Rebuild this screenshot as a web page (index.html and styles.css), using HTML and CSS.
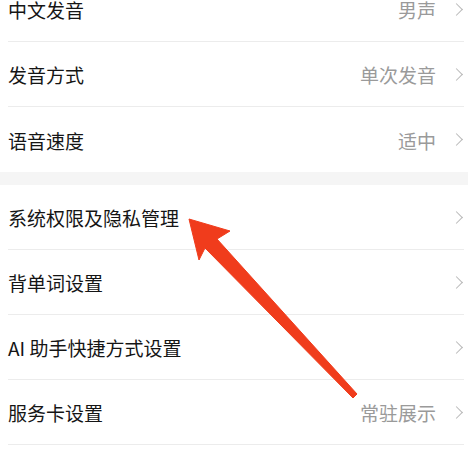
FILE: index.html
```html
<!DOCTYPE html>
<html lang="zh-CN">
<head>
  <meta charset="UTF-8">
  <meta name="viewport" content="width=device-width, initial-scale=1.0">
  <title>设置</title>
  <link rel="stylesheet" href="styles.css">
</head>
<body>
  <div class="settings">
    <div class="group">
      <div class="row">
        <span class="label">中文发音</span>
        <span class="value">男声</span>
        <span class="chevron"></span>
      </div>
      <div class="row">
        <span class="label">发音方式</span>
        <span class="value">单次发音</span>
        <span class="chevron"></span>
      </div>
      <div class="row">
        <span class="label">语音速度</span>
        <span class="value">适中</span>
        <span class="chevron"></span>
      </div>
    </div>

    <div class="group">
      <div class="row">
        <span class="label">系统权限及隐私管理</span>
        <span class="chevron"></span>
      </div>
      <div class="row">
        <span class="label">背单词设置</span>
        <span class="chevron"></span>
      </div>
      <div class="row">
        <span class="label">AI 助手快捷方式设置</span>
        <span class="chevron"></span>
      </div>
      <div class="row">
        <span class="label">服务卡设置</span>
        <span class="value">常驻展示</span>
        <span class="chevron"></span>
      </div>
      <div class="row row-end"></div>
    </div>
  </div>

  <svg class="arrow" width="468" height="452" viewBox="0 0 468 452">
    <polygon points="189,219 230,231 217,239 357,394 353,398 205,248 199,260" fill="#f03c1c" stroke="#f03c1c" stroke-width="1" stroke-linejoin="round"/>
  </svg>
</body>
</html>
```

FILE: styles.css
```css
* {
  box-sizing: border-box;
}

body {
  margin: 0;
  padding: 0;
  background-color: #fff;
  font-family: "Noto Sans CJK SC", "Noto Sans", sans-serif;
  width: 468px;
  height: 452px;
  overflow: hidden;
  position: relative;
}

.settings {
  margin-top: -23px;
  background-color: #f5f5f5;
}

.group {
  background-color: #fff;
  margin-bottom: 13px;
}

.row {
  height: 65px;
  margin-left: 8px;
  margin-right: 4px;
  border-bottom: 1px solid #ececec;
  display: flex;
  align-items: center;
  padding-top: 1px;
}

.group .row:last-child {
  border-bottom: none;
}

.row-end {
  height: 9px;
}

.label {
  flex: 1;
  font-size: 19px;
  color: #151515;
}

.value {
  font-size: 19px;
  color: #9a9a9a;
  margin-right: 16px;
}

.chevron {
  width: 9px;
  height: 9px;
  border-top: 1.5px solid #b8b8b8;
  border-right: 1.5px solid #b8b8b8;
  transform: rotate(45deg);
  margin-right: 3px;
  margin-top: -1px;
}

.arrow {
  position: absolute;
  left: 0;
  top: 0;
}
```
